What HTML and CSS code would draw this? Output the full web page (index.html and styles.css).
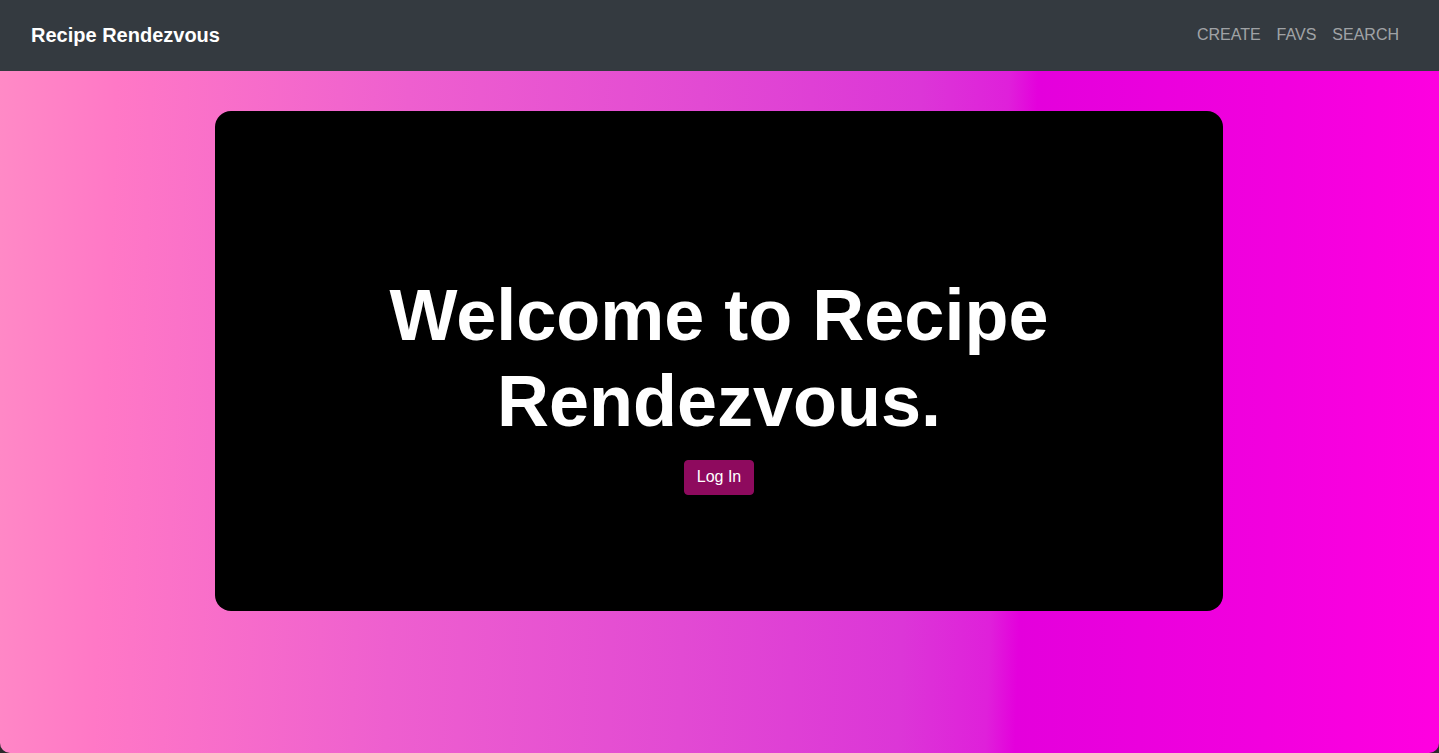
FILE: index.html
```html
<!DOCTYPE html>
<html lang="en">

<head>
  <meta charset="UTF-8">
  <meta name="viewport" content="width=device-width, initial-scale=1.0">
  <title>Recipe Rendezvous</title>

  <link rel="stylesheet" href="styles.css">
</head>

<body>

  <nav id="navbar">
    <a class="brand" href="#">Recipe Rendezvous</a>
    <div class="links">
      <a href="#">CREATE</a>
      <a href="#">FAVS</a>
      <a href="#">SEARCH</a>
    </div>
  </nav>

  <main id="page">
    <div id="hero">
      <h1>Welcome to Recipe Rendezvous.</h1>
      <button class="login">Log In</button>
    </div>
  </main>

</body>

</html>
```

FILE: styles.css
```css
html {
  background-color: #2b2b2b;
}

body {
  margin: 0;
  height: 100vh;
  display: flex;
  flex-direction: column;
  font-family: "Liberation Sans", Arial, sans-serif;
}

#navbar {
  height: 71px;
  flex-shrink: 0;
  display: flex;
  align-items: center;
  justify-content: space-between;
  padding: 0 40px 0 31px;
  background-color: #343a40;
}

#navbar a {
  text-decoration: none;
}

.brand {
  color: #fff;
  font-size: 20px;
  font-weight: bold;
}

.links {
  display: flex;
  gap: 16px;
  padding-bottom: 1px;
}

.links a {
  color: rgba(255, 255, 255, 0.55);
  font-size: 16px;
}

#page {
  flex: 1;
  padding: 40px 216px 0 215px;
  border-radius: 0 0 10px 10px;
  background: linear-gradient(92deg, #ff8ac6 0%, #ff78c6 8%, #ee5fcf 28%, #e24ad3 48%, #dc36d7 63%, #df20da 69%, #e400dc 71%, #f200de 88%, #ff00e0 100%);
}

#hero {
  height: 500px;
  box-sizing: border-box;
  padding-top: 45px;
  border-radius: 16px;
  background-color: #000;
  display: flex;
  flex-direction: column;
  align-items: center;
  justify-content: center;
  text-align: center;
}

#hero h1 {
  color: #fff;
  font-size: 72px;
  line-height: 1.2;
  font-weight: bold;
  width: 700px;
  margin: 0 0 16px 0;
}

.login {
  font-family: "Liberation Sans", Arial, sans-serif;
  font-size: 16px;
  line-height: 24px;
  padding: 4px 12px 5px 12px;
  color: #fff;
  background-color: #8e0a5e;
  border: 1px solid #8e0a5e;
  border-radius: 4px;
}
```
